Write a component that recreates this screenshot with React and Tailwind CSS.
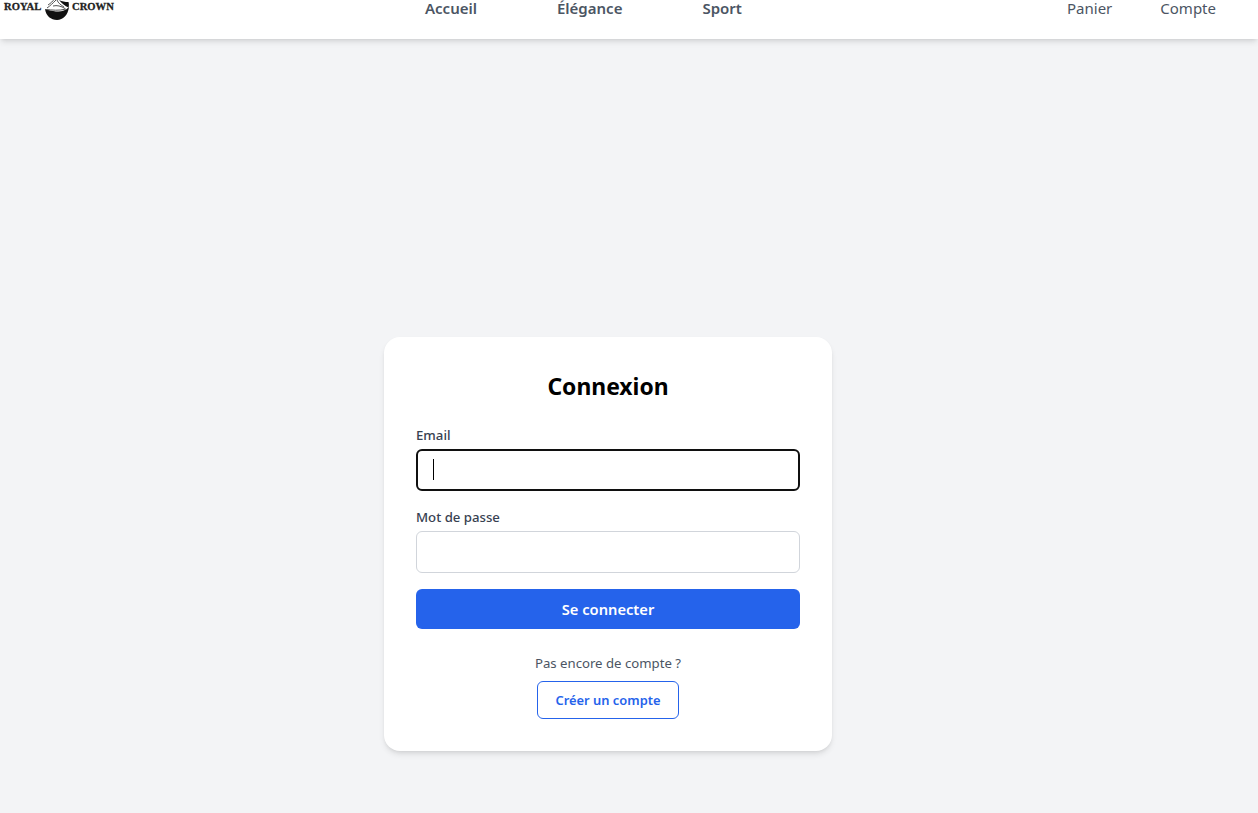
const font = "font-['Noto_Sans','Open_Sans',sans-serif]";

const Logo = () => (
    <div className="relative h-[22px] font-['Liberation_Serif',serif] font-bold text-[10.6px] leading-[14px] text-[#222] [-webkit-text-stroke:0.3px_#222]">
        <div className="flex">
            <span className="ml-[4px] w-[40px]">ROYAL</span>
            <svg width="26" height="22" viewBox="0 0 26 22" className="shrink-0 -mt-[1px] mr-[2px]">
                <path d="M1 10 C2 17 7 21 13 21 C19 21 24 16 25 8 C21 12 17 13 12 12.5 C8 12 4 11 1 10 Z" fill="#111" />
                <path d="M15 1 C18 2.5 21 3 24.5 3 C25 5 25 7 24.5 8.5 C21 7 18 4.5 15 1 Z" fill="#111" />
                <path d="M3 9 C6 7 9 4 12 1 M2 10.5 C8 11 15 12 22 10 M4 6 C7 4 9 2 10 0.5 M9 7 C13 6 17 7 21 9.5 M13 1 C14 4 17 6 20 8" stroke="#555" strokeWidth="1" fill="none" />
            </svg>
            <span>CROWN</span>
        </div>
    </div>
);

const Field = ({label, focused}) => (
    <div className="mb-4">
        <label className="block mb-1 text-[13.2px] leading-5 font-medium text-[#374151]">{label}</label>
        <div className="relative">
            <input
                className={focused
                    ? "block w-full h-[42px] rounded-md bg-white border-2 border-[#101010] outline-none"
                    : "block w-full h-[42px] rounded-md bg-white border border-[#d1d5db] outline-none"}
            />
            {focused && <span className="absolute left-[17px] top-[10px] w-px h-[21px] bg-black" />}
        </div>
    </div>
);

export default function App() {
    return (
        <div className={`min-h-[813px] bg-[#f3f4f6] ${font}`}>
            <header className="h-[39px] bg-white shadow-md">
                <div className="flex h-[39px] overflow-hidden">
                    <div className="w-[425px] shrink-0"><Logo /></div>
                    <nav className="flex gap-[80px] font-semibold text-[15px] text-[#4b5563] leading-[16px]">
                        <a>Accueil</a>
                        <a>Élégance</a>
                        <a>Sport</a>
                    </nav>
                    <div className="ml-auto flex gap-[48px] pr-[42px] text-[15px] text-[#4b5563] leading-[16px]">
                        <a>Panier</a>
                        <a>Compte</a>
                    </div>
                </div>
            </header>
            <main className="pt-[298px] pb-[62px] pl-[384px]">
                <div className="w-[448px] bg-white rounded-2xl shadow-md p-8">
                    <h1 className="mb-5 text-[22.9px] leading-9 font-bold text-center text-black">Connexion</h1>
                    <Field label="Email" focused />
                    <Field label="Mot de passe" />
                    <button className="block w-full h-10 rounded-md bg-[#2563eb] text-white font-semibold text-[14.7px]">Se connecter</button>
                    <div className="mt-6 text-center">
                        <p className="text-[13.2px] leading-5 text-[#4b5563]">Pas encore de compte ?</p>
                        <a className="inline-block mt-2 h-[38px] leading-[36px] px-[17px] rounded-md border border-[#2563eb] text-[#2563eb] text-[12.9px] font-semibold">Créer un compte</a>
                    </div>
                </div>
            </main>
        </div>
    );
}
